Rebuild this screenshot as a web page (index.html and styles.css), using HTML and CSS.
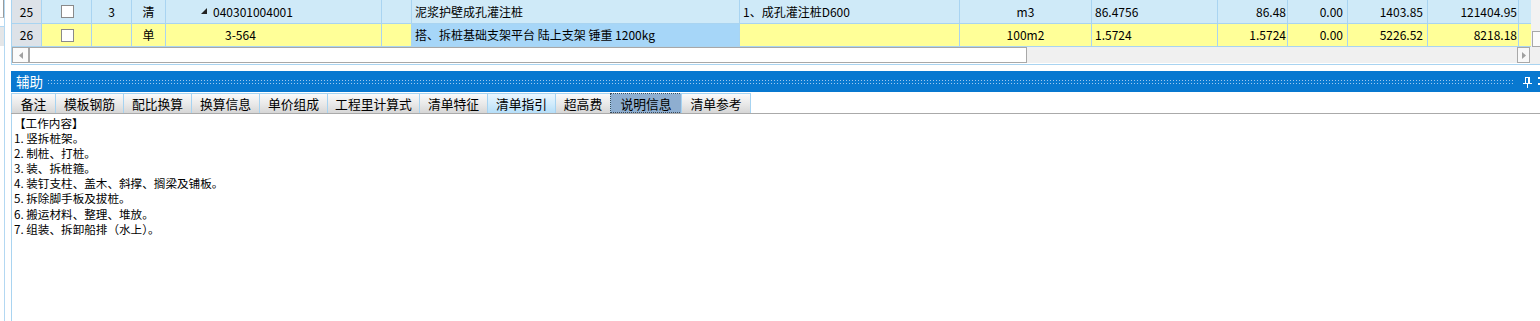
FILE: index.html
```html
<!DOCTYPE html>
<html>
<head>
<meta charset="utf-8">
<link rel="stylesheet" href="styles.css">
</head>
<body>
<div class="app">
  <div class="side">
    <div class="side-box"></div>
    <div class="side-grey"></div>
  </div>
  <div class="main">
    <div class="gridpanel">
      <div class="gridbody">
        <div class="rows">
          <div class="row r25">
            <div class="c rh">25</div>
            <div class="c ck"><span class="box"></span></div>
            <div class="c ctr">3</div>
            <div class="c ctr">清</div>
            <div class="c code"><svg class="tri" width="6" height="6" viewBox="0 0 6 6"><polygon points="6,0 6,6 0,6" fill="#222"/></svg>040301004001</div>
            <div class="c"></div>
            <div class="c txt">泥浆护壁成孔灌注桩</div>
            <div class="c txt">1、成孔灌注桩D600</div>
            <div class="c ctr">m3</div>
            <div class="c txt">86.4756</div>
            <div class="c num p1">86.48</div>
            <div class="c num p4">0.00</div>
            <div class="c num p4">1403.85</div>
            <div class="c num p1">121404.95</div>
            <div class="c last"></div>
          </div>
          <div class="row r26">
            <div class="c rh">26</div>
            <div class="c ck"><span class="box"></span></div>
            <div class="c ctr"></div>
            <div class="c ctr">单</div>
            <div class="c code sub">3-564</div>
            <div class="c"></div>
            <div class="c txt sel">搭、拆桩基础支架平台 陆上支架 锤重 1200kg</div>
            <div class="c txt"></div>
            <div class="c ctr">100m2</div>
            <div class="c txt">1.5724</div>
            <div class="c num p1">1.5724</div>
            <div class="c num p4">0.00</div>
            <div class="c num p4">5226.52</div>
            <div class="c num p1">8218.18</div>
            <div class="c last"></div>
          </div>
        </div>
        <div class="vscroll"><div class="vbtn"></div></div>
      </div>
      <div class="hscroll">
        <div class="sbtn"><svg width="4" height="7" viewBox="0 0 4 7"><polygon points="4,0 4,7 0,3.5" fill="#a0a0a0"/></svg></div>
        <div class="thumb"></div>
        <div class="track"></div>
        <div class="sbtn rb"><svg width="4" height="7" viewBox="0 0 4 7"><polygon points="0,0 0,7 4,3.5" fill="#a0a0a0"/></svg></div>
        <div class="corner"></div>
      </div>
    </div>

    <div class="dock">
      <div class="dock-head">
        <span class="dock-title">辅助</span>
        <div class="dots"></div>
        <svg class="pin" width="9" height="11" viewBox="0 0 9 11">
          <rect x="2.5" y="0.5" width="3" height="6" fill="none" stroke="#fff"/>
          <rect x="5" y="0" width="2" height="7" fill="#fff"/>
          <rect x="0" y="6" width="9" height="1" fill="#fff"/>
          <rect x="4" y="7" width="1" height="4" fill="#fff"/>
        </svg>
        <svg class="xmark" width="6" height="11" viewBox="0 0 6 11">
          <rect x="0" y="1" width="2" height="2" fill="#fff"/>
          <rect x="0" y="7" width="2" height="2" fill="#fff"/>
        </svg>
      </div>
      <div class="tabs">
        <div class="tab">备注</div>
        <div class="tab w68">模板钢筋</div>
        <div class="tab w68">配比换算</div>
        <div class="tab w68">换算信息</div>
        <div class="tab w68">单价组成</div>
        <div class="tab w92">工程里计算式</div>
        <div class="tab w68">清单特征</div>
        <div class="tab w68 hover">清单指引</div>
        <div class="tab w55">超高费</div>
        <div class="tab w71 active">说明信息</div>
        <div class="tab w69">清单参考</div>
      </div>
      <div class="content">
        <div class="line">【工作内容】</div>
        <div class="line">1. 竖拆桩架。</div>
        <div class="line">2. 制桩、打桩。</div>
        <div class="line">3. 装、拆桩箍。</div>
        <div class="line">4. 装钉支柱、盖木、斜撑、搁梁及铺板。</div>
        <div class="line">5. 拆除脚手板及拔桩。</div>
        <div class="line">6. 搬运材料、整理、堆放。</div>
        <div class="line">7. 组装、拆卸船排（水上）。</div>
      </div>
    </div>
  </div>
</div>
</body>
</html>
```

FILE: styles.css
```css
* { box-sizing: border-box; }
html, body {
  margin: 0;
  padding: 0;
  width: 1540px;
  height: 321px;
  overflow: hidden;
  background: #fff;
  font-family: "Noto Sans CJK SC", "Noto Sans", sans-serif;
  font-size: 12px;
  color: #000;
}
.app {
  display: flex;
  width: 1540px;
  height: 321px;
}
.side {
  width: 11px;
  flex: none;
  height: 321px;
  background: linear-gradient(90deg, transparent 4px, #b3d8f2 4px, #b3d8f2 5px, transparent 5px);
}
.side-box {
  width: 4px;
  height: 18px;
  background: #fff;
  border-right: 1px solid #9a9a9a;
  border-bottom: 1px solid #c8c8c8;
}
.side-grey {
  width: 4px;
  height: 20px;
  margin-top: 8px;
  background: #e4e6e8;
  border-top: 1px solid #b3d8f2;
}
.main {
  flex: 1;
  display: flex;
  flex-direction: column;
  min-width: 0;
}
.gridpanel {
  border-left: 1px solid #a9d4f1;
  border-bottom: 1px solid #a9d4f1;
}
.gridbody {
  display: flex;
}
.rows {
  width: 1519px;
  flex: none;
}
.row {
  display: grid;
  grid-template-columns: 30px 50px 40px 34px 216px 30px 328px 220px 132px 126px 70px 60px 80px 91px 12px;
}
.r25 { height: 24px; background: #cfeaf8; }
.r26 { height: 23px; background: #ffff98; }
.c {
  border-right: 1px solid #a9d4f1;
  border-bottom: 1px solid #a9d4f1;
  display: flex;
  align-items: center;
  white-space: nowrap;
  overflow: hidden;
  line-height: 16px;
}
.c.last { border-right: none; }
.rh {
  background: #dde2e8;
  justify-content: center;
}
.ck { justify-content: center; padding-left: 2px; }
.box {
  display: block;
  width: 13px;
  height: 13px;
  background: #fff;
  border: 1px solid #8a8a8a;
}
.ctr { justify-content: center; }
.txt { padding-left: 3px; }
.code { padding-left: 35px; }
.code .tri { margin-right: 6px; margin-top: -1px; }
.code.sub { padding-left: 59px; }
.sel { background: #a6d6f8; }
.num { justify-content: flex-end; }
.p1 { padding-right: 1px; }
.p4 { padding-right: 4px; }
.vscroll {
  flex: 1;
  background: #f2f2f2;
  display: flex;
  flex-direction: column;
  justify-content: flex-end;
  padding-left: 1px;
}
.vbtn {
  height: 16px;
  width: 17px;
  background: #fbfbfb;
  border: 1px solid #a8a8a8;
}
.hscroll {
  display: flex;
  height: 17px;
  background: #fff;
}
.sbtn {
  width: 17px;
  height: 16px;
  flex: none;
  border: 1px solid #a8a8a8;
  background: #fbfbfb;
  display: flex;
  align-items: center;
  justify-content: center;
}
.sbtn.rb { width: 13px; background: #f8f8f8; }
.thumb {
  width: 998px;
  height: 16px;
  flex: none;
  background: #fff;
  border: 1px solid #a8a8a8;
}
.track {
  flex: 1;
  height: 16px;
  background: #f0f0f0;
}
.corner {
  width: 10px;
  flex: none;
  height: 17px;
  background: #f0f0f0;
}
.dock {
  margin-top: 6px;
  flex: 1;
  display: flex;
  flex-direction: column;
}
.dock-head {
  height: 21px;
  background: #0878d0;
  display: flex;
  align-items: center;
  padding-left: 5px;
  margin-bottom: 1px;
}
.dock-title {
  color: #fff;
  font-size: 13.5px;
  line-height: 21px;
  width: 32px;
  flex: none;
}
.dots {
  flex: none;
  width: 1467px;
  height: 5px;
  margin-top: 1px;
  background: conic-gradient(from 270deg at 1px 1px, #9fc8ef 0 25%, transparent 0) 0 0 / 3px 3px;
}
.pin { flex: none; margin-left: 8px; margin-top: 1px; }
.xmark { flex: none; margin-left: 6px; }
.tabs {
  display: flex;
  height: 21px;
  border-bottom: 1px solid #aaaaaa;
}
.tab {
  width: 45px;
  height: 20px;
  flex: none;
  border: 1px solid #a6d3f1;
  border-bottom: none;
  margin-right: -1px;
  background: linear-gradient(#fafafa, #e8e8e8 55%, #d6d6d6);
  display: flex;
  align-items: center;
  justify-content: center;
  font-size: 12.8px;
  line-height: 18px;
}
.w55 { width: 56px; }
.w68 { width: 69px; }
.w69 { width: 70px; }
.w71 { width: 72px; }
.w92 { width: 93px; }
.tab.hover {
  background: linear-gradient(#eaf6fe, #d2ecfc 50%, #b5def8);
}
.tab.active {
  background: #8eaed0;
  outline: 1px dotted #3a4a5a;
  outline-offset: -1px;
}
.content {
  flex: 1;
  border-left: 1px solid #a9d4f1;
  padding: 2px 0 0 2px;
}
.line {
  font-size: 11.6px;
  line-height: 15.1px;
  height: 15.1px;
  white-space: nowrap;
}
```
